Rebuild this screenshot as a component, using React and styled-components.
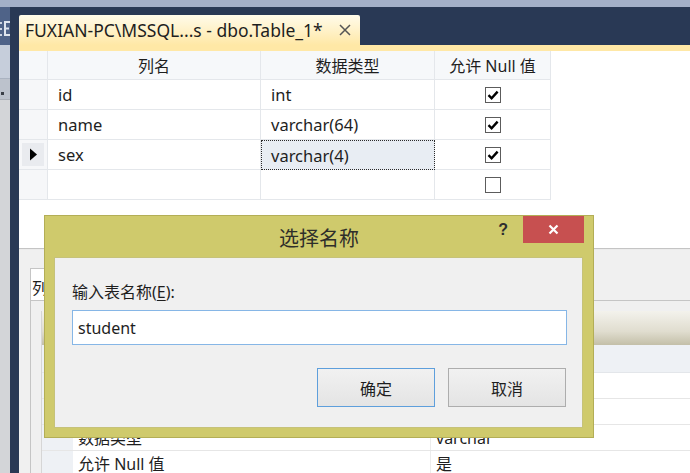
import React from "react";
import styled, { createGlobalStyle } from "styled-components";

const UI = `"Noto Sans", "Noto Sans CJK SC", sans-serif`;

const GlobalStyle = createGlobalStyle`
  html, body { margin: 0; padding: 0; background: #293955; }
  body { font-family: ${UI}; }
  * { box-sizing: border-box; }
`;

const Screen = styled.div`
  position: relative;
  width: 690px;
  height: 473px;
  overflow: hidden;
  display: flex;
  flex-direction: column;
  font-family: ${UI};
  color: #1e1e1e;
`;

const TopStrip = styled.div`
  flex: none;
  height: 7px;
  background: #a3b0c8;
`;

const Workspace = styled.div`
  flex: 1;
  display: flex;
  min-height: 0;
`;

const SideBar = styled.div`
  flex: none;
  width: 10px;
  display: flex;
  flex-direction: column;
`;

const SideHead = styled.div`
  flex: none;
  height: 38px;
  background: #4f6388;
  display: flex;
  align-items: flex-start;
`;

const SideSection = styled.div`
  flex: ${(p) => (p.$h ? "none" : "1")};
  height: ${(p) => (p.$h ? `${p.$h}px` : "auto")};
  background: ${(p) => p.$bg};
  border-bottom: ${(p) => (p.$line ? `1px solid ${p.$line}` : "none")};
  display: flex;
  align-items: flex-end;
  padding: 0 0 4px 1px;
`;

const SideDot = styled.span`
  width: 3px;
  height: 3px;
  background: #3a3f47;
`;

const NavyRail = styled.div`
  flex: none;
  width: 9px;
  background: #293955;
`;

const Main = styled.div`
  flex: 1;
  min-width: 0;
  display: flex;
  flex-direction: column;
`;

const TabWell = styled.div`
  flex: none;
  height: 38px;
  background: #293955;
  padding-top: 8px;
  display: flex;
`;

const DocTab = styled.div`
  width: 341px;
  height: 30px;
  background: linear-gradient(#fffbea, #fff1c6 55%, #ffe8a6);
  border-radius: 2px 2px 0 0;
  display: flex;
  align-items: center;
  justify-content: space-between;
  padding: 0 9px 0 6px;
  font-size: 17.5px;
  color: #1e1e1e;
  white-space: nowrap;
`;

const TabRule = styled.div`
  flex: none;
  height: 6px;
  background: #ffe8a6;
`;

const Designer = styled.div`
  flex: none;
  height: 197px;
  background: #ffffff;
`;

const ColumnGrid = styled.div`
  display: grid;
  width: 532px;
  grid-template-columns: 29px 213px 174px 116px;
  grid-template-rows: 29px repeat(4, 30px);
`;

const Cell = styled.div`
  display: flex;
  align-items: center;
  justify-content: ${(p) => (p.$center ? "center" : "flex-start")};
  padding-left: ${(p) => (p.$center ? 0 : 10)}px;
  font-size: 16.5px;
  border-right: 1px solid #e4e7eb;
  border-bottom: 1px solid #e4e7eb;
  background: ${(p) => p.$bg || "#ffffff"};
  white-space: nowrap;
`;

const HeadCell = styled(Cell)`
  background: #f6f8fa;
  color: #1e1e1e;
  font-size: 16px;
`;

const SelectorCell = styled(Cell)`
  padding: 3px;
  background: #f6f7f9;
  justify-content: center;
`;

const SelectorInner = styled.div`
  flex: 1;
  align-self: stretch;
  display: flex;
  align-items: center;
  justify-content: center;
  background: ${(p) => (p.$current ? "#e9ebef" : "transparent")};
`;

const FocusCell = styled(Cell)`
  background: #e8edf3;
  border: 1px dotted #2a2a2a;
  padding-left: 9px;
`;

const CheckBox = styled.span`
  width: 16px;
  height: 16px;
  border: 1px solid #5c5c5c;
  background: #fff;
  display: flex;
  align-items: center;
  justify-content: center;
`;

const Splitter = styled.div`
  flex: none;
  height: 2px;
  border-top: 1px solid #c4c4c4;
  background: #ebebeb;
`;

const PropsPanel = styled.div`
  flex: 1;
  background: #f0f0f0;
  padding: 18px 0 0 11px;
  display: flex;
  flex-direction: column;
  min-height: 0;
`;

const PropTabStrip = styled.div`
  flex: none;
  height: 32px;
  display: flex;
`;

const PropTab = styled.div`
  width: 80px;
  background: #ffffff;
  border: 1px solid #c5c5c5;
  border-bottom: none;
  padding: 6px 0 0 1px;
  font-size: 16px;
`;

const PropPage = styled.div`
  flex: 1;
  border-top: 1px solid #c5c5c5;
  border-left: 1px solid #c5c5c5;
  padding: 10px 0 0 10px;
  display: flex;
  flex-direction: column;
`;

const PropGrid = styled.div`
  flex: 1;
  background: #ffffff;
  border-left: 1px solid #d6d6d6;
  display: flex;
  flex-direction: column;
`;

const GridToolbar = styled.div`
  flex: none;
  height: 34px;
  background: linear-gradient(#f3f2ec, #e0ddcf 60%, #c3bfa8);
`;

const CategoryRow = styled.div`
  flex: none;
  height: 28px;
  background: #eef1f5;
  display: flex;
  align-items: center;
  padding-left: 36px;
  font-size: 16px;
  border-bottom: 1px solid #e3e6ea;
`;

const PropRow = styled.div`
  flex: none;
  height: 26px;
  display: grid;
  grid-template-columns: 31px 357px 1fr;
  border-bottom: 1px solid #e6e6e6;
  font-size: 16px;
  line-height: 24px;
`;

const Gutter = styled.div`
  background: #eef1f5;
`;

const PropName = styled.div`
  display: flex;
  align-items: center;
  padding-left: 5px;
  white-space: nowrap;
`;

const PropValue = styled.div`
  display: flex;
  align-items: center;
  padding-left: 5px;
  border-left: 1px solid #ececec;
  white-space: nowrap;
`;

/* Dialog overlaying the designer */
const Dialog = styled.div`
  position: absolute;
  left: 44px;
  top: 215px;
  width: 550px;
  height: 223px;
  background: #cfca6c;
  border: 1px solid #b3ae56;
  display: flex;
  flex-direction: column;
`;

const TitleBar = styled.div`
  flex: none;
  height: 41px;
  display: grid;
  grid-template-columns: 1fr auto 1fr;
`;

const TitleText = styled.div`
  grid-column: 2;
  align-self: center;
  padding-top: 2px;
  font-size: 20px;
  color: #2e2e2a;
`;

const TitleControls = styled.div`
  grid-column: 3;
  justify-self: end;
  display: flex;
  align-items: flex-start;
  padding-right: 9px;
`;

const HelpGlyph = styled.span`
  font-family: "Liberation Sans", sans-serif;
  font-weight: 700;
  font-size: 16px;
  color: #2f2f2f;
  margin: 5px 15px 0 0;
`;

const CloseButton = styled.div`
  width: 61px;
  height: 27px;
  background: #c75050;
  display: flex;
  align-items: center;
  justify-content: center;
`;

const Client = styled.div`
  flex: 1;
  margin: 0 10px 9px 9px;
  background: #f0f0f0;
  border: 1px solid #c6c27a;
  padding: 24px 15px 0 17px;
  display: flex;
  flex-direction: column;
`;

const FieldLabel = styled.div`
  height: 20px;
  line-height: 20px;
  font-size: 16px;
  color: #1e1e1e;
`;

const Underlined = styled.span`
  text-decoration: underline;
  text-underline-offset: 2px;
`;

const NameInput = styled.div`
  margin-top: 8px;
  height: 35px;
  background: #ffffff;
  border: 1px solid #86b6e6;
  display: flex;
  align-items: center;
  padding-left: 5px;
  font-size: 16px;
  color: #1e1e1e;
`;

const ButtonRow = styled.div`
  margin-top: 23px;
  display: flex;
  justify-content: flex-end;
  gap: 13px;
  padding-right: 1px;
`;

const DialogButton = styled.div`
  width: 118px;
  height: 39px;
  display: flex;
  align-items: center;
  justify-content: center;
  font-size: 16px;
  color: #1e1e1e;
  background: linear-gradient(#f1f1f1, #e4e4e4);
  border: 1px solid ${(p) => (p.$primary ? "#5e9fdc" : "#adadad")};
`;

const Check = () => (
  <svg width="12" height="12" viewBox="0 0 12 12">
    <path d="M1.5 6.2 L4.6 9.3 L10.6 2.6" fill="none" stroke="#000" strokeWidth="2.4" />
  </svg>
);

const rows = [
  { name: "id", type: "int", nul: true },
  { name: "name", type: "varchar(64)", nul: true },
  { name: "sex", type: "varchar(4)", nul: true, current: true },
  { name: "", type: "", nul: false },
];

export default function App() {
  return (
    <>
      <GlobalStyle />
      <Screen>
        <TopStrip />
        <Workspace>
          <SideBar>
            <SideHead>
              <svg width="10" height="38" viewBox="0 0 10 38">
                <rect x="0" y="15" width="2" height="2" fill="#cdd5e2" />
                <rect x="0" y="21" width="2" height="2" fill="#cdd5e2" />
                <rect x="0" y="27" width="2" height="2" fill="#cdd5e2" />
                <rect x="4" y="14" width="2" height="15" fill="#dfe5ee" />
                <rect x="4" y="14" width="6" height="2" fill="#dfe5ee" />
                <rect x="4" y="20.5" width="5" height="2" fill="#dfe5ee" />
                <rect x="4" y="27" width="6" height="2" fill="#dfe5ee" />
              </svg>
            </SideHead>
            <SideSection $h={34} $bg="#c6cedb" $line="#aab3c1" />
            <SideSection $h={21} $bg="#bcc2cc" $line="#a9aeb6">
              <SideDot />
            </SideSection>
            <SideSection $bg="#d3d5d8" />
          </SideBar>
          <NavyRail />
          <Main>
            <TabWell>
              <DocTab>
                <span>FUXIAN-PC\MSSQL...s - dbo.Table_1*</span>
                <svg width="12" height="12" viewBox="0 0 12 12">
                  <path d="M1 1 L11 11 M11 1 L1 11" stroke="#555" strokeWidth="1.5" />
                </svg>
              </DocTab>
            </TabWell>
            <TabRule />
            <Designer>
              <ColumnGrid>
                <HeadCell $center />
                <HeadCell $center>列名</HeadCell>
                <HeadCell $center>数据类型</HeadCell>
                <HeadCell $center>允许 Null 值</HeadCell>
                {rows.map((r, i) => (
                  <React.Fragment key={i}>
                    <SelectorCell>
                      <SelectorInner $current={r.current}>
                        {r.current && (
                          <svg width="9" height="13" viewBox="0 0 9 13">
                            <path d="M1 0.5 L8 6.5 L1 12.5 Z" fill="#000" />
                          </svg>
                        )}
                      </SelectorInner>
                    </SelectorCell>
                    <Cell>{r.name}</Cell>
                    {r.current ? <FocusCell>{r.type}</FocusCell> : <Cell>{r.type}</Cell>}
                    <Cell $center>
                      <CheckBox>{r.nul && <Check />}</CheckBox>
                    </Cell>
                  </React.Fragment>
                ))}
              </ColumnGrid>
            </Designer>
            <Splitter />
            <PropsPanel>
              <PropTabStrip>
                <PropTab>列属性</PropTab>
              </PropTabStrip>
              <PropPage>
                <PropGrid>
                  <GridToolbar />
                  <CategoryRow>(常规)</CategoryRow>
                  <PropRow>
                    <Gutter />
                    <PropName>(名称)</PropName>
                    <PropValue>sex</PropValue>
                  </PropRow>
                  <PropRow>
                    <Gutter />
                    <PropName>长度</PropName>
                    <PropValue>4</PropValue>
                  </PropRow>
                  <PropRow>
                    <Gutter />
                    <PropName>数据类型</PropName>
                    <PropValue>varchar</PropValue>
                  </PropRow>
                  <PropRow>
                    <Gutter />
                    <PropName>允许 Null 值</PropName>
                    <PropValue>是</PropValue>
                  </PropRow>
                </PropGrid>
              </PropPage>
            </PropsPanel>
          </Main>
        </Workspace>

        <Dialog>
          <TitleBar>
            <TitleText>选择名称</TitleText>
            <TitleControls>
              <HelpGlyph>?</HelpGlyph>
              <CloseButton>
                <svg width="11" height="11" viewBox="0 0 11 11">
                  <path d="M1.5 1.5 L9.5 9.5 M9.5 1.5 L1.5 9.5" stroke="#fff" strokeWidth="2.2" />
                </svg>
              </CloseButton>
            </TitleControls>
          </TitleBar>
          <Client>
            <FieldLabel>
              输入表名称(<Underlined>E</Underlined>):
            </FieldLabel>
            <NameInput>student</NameInput>
            <ButtonRow>
              <DialogButton $primary>确定</DialogButton>
              <DialogButton>取消</DialogButton>
            </ButtonRow>
          </Client>
        </Dialog>
      </Screen>
    </>
  );
}
